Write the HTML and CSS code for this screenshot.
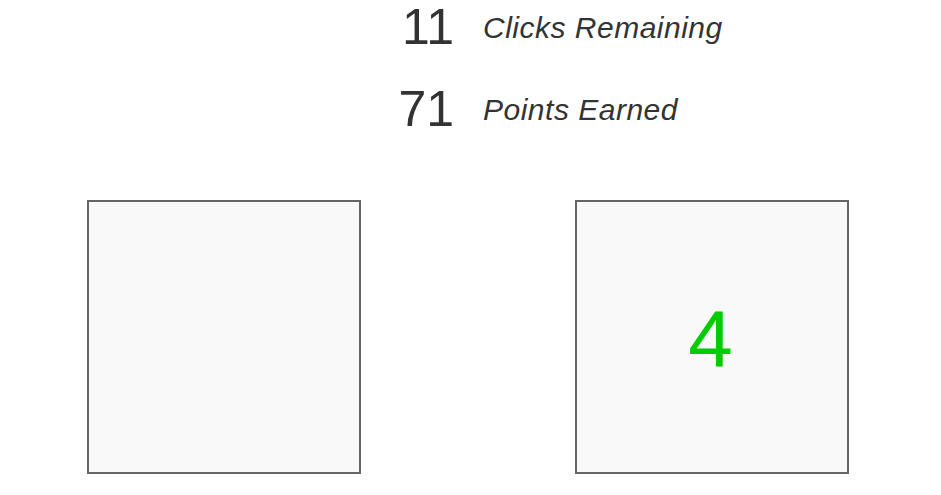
FILE: index.html
```html
<!DOCTYPE html>
<html>
<head>
<meta charset="utf-8">
<link rel="stylesheet" href="styles.css">
</head>
<body>
<div class="stats">
  <div class="stat">
    <span class="stat-value">11</span>
    <span class="stat-label">Clicks Remaining</span>
  </div>
  <div class="stat">
    <span class="stat-value">71</span>
    <span class="stat-label">Points Earned</span>
  </div>
</div>
<div class="board">
  <div class="tile"></div>
  <div class="tile"><span class="tile-value">4</span></div>
</div>
</body>
</html>
```
FILE: styles.css
```css
html, body {
  margin: 0;
  padding: 0;
  background: #ffffff;
  font-family: "Liberation Sans", Arial, sans-serif;
  color: #333333;
}

.stats {
  display: flex;
  flex-direction: column;
  gap: 24px;
  margin-left: 374px;
}

.stat {
  display: flex;
  align-items: flex-start;
  gap: 29px;
  height: 58px;
}

.stat-value {
  width: 80px;
  text-align: right;
  font-size: 50px;
  line-height: 54px;
}

.stat-label {
  font-size: 30px;
  font-style: italic;
  letter-spacing: 0.5px;
  line-height: 34px;
  margin-top: 11px;
}

.board {
  display: flex;
  gap: 214px;
  padding-left: 87px;
  margin-top: 60px;
}

.tile {
  box-sizing: border-box;
  width: 274px;
  height: 274px;
  border: 2px solid #666666;
  background: #f9f9f9;
  display: flex;
  align-items: center;
  justify-content: center;
}

.tile-value {
  font-size: 80px;
  line-height: 1;
  color: #00cc00;
  margin-right: 3px;
  margin-top: 3px;
}
```
